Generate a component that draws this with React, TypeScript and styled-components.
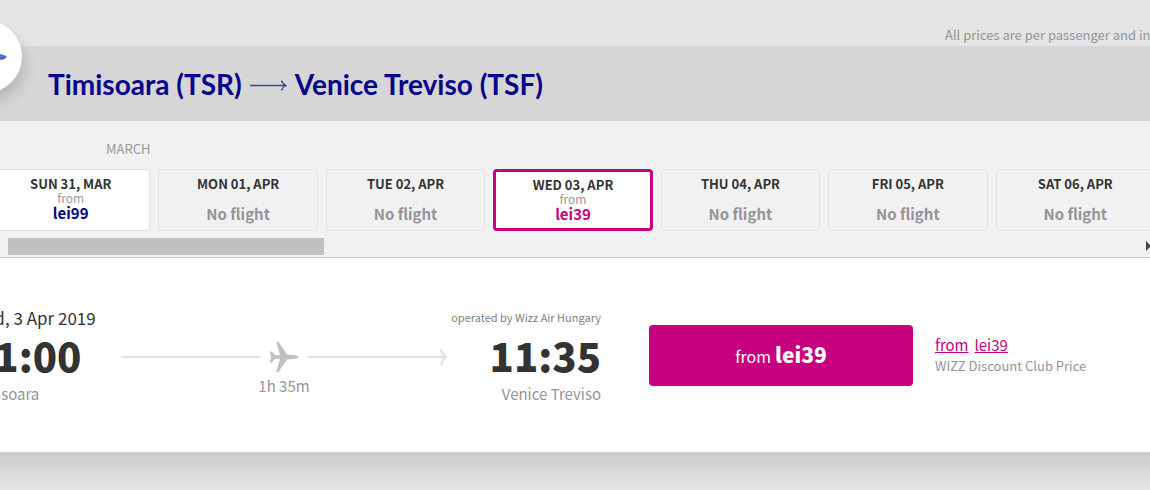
import React from "react";
import styled, { createGlobalStyle } from "styled-components";

const GlobalStyle = createGlobalStyle`
  * { box-sizing: border-box; }
  body {
    margin: 0;
    background: #e4e4e4;
    color: #333;
    font-family: "Noto Sans CJK SC", "Noto Sans", sans-serif;
    overflow-x: hidden;
  }
`;

const Page = styled.main`
  overflow: hidden;
`;

const PriceNote = styled.p`
  width: 205px;
  height: 46px;
  margin: 0 0 0 auto;
  padding-top: 25px;
  font-size: 13px;
  line-height: 20px;
  color: #96939a;
  white-space: nowrap;
`;

const FlightPanel = styled.section`
  background: #fff;
`;

const PanelShadow = styled.div`
  height: 38px;
  background: linear-gradient(#cdcdcd, #d1d1d1 30%, #e0e0e0 75%, #e4e4e4);
`;

const RouteHeader = styled.header`
  position: relative;
  display: flex;
  align-items: center;
  height: 75px;
  padding-left: 48px;
  background: #d6d6d6;
`;

const RouteBadge = styled.span`
  position: absolute;
  left: -51px;
  top: -26px;
  width: 73px;
  height: 73px;
  border-radius: 50%;
  background: #fff;
  box-shadow: 3px 9px 14px rgba(0, 0, 0, 0.14);
  display: flex;
  align-items: center;
  justify-content: center;
`;

const RouteTitle = styled.h1`
  display: flex;
  align-items: center;
  gap: 8px;
  margin: 0;
  font-family: Lato, sans-serif;
  font-size: 28px;
  line-height: 36px;
  font-weight: 700;
  color: #06038d;
  white-space: nowrap;
`;

const Calendar = styled.div`
  background: #f1f1f1;
  border-bottom: 1px solid #c4c4c4;
`;

const Month = styled.div`
  padding: 18px 0 10px 106px;
  font-size: 13px;
  line-height: 20px;
  color: #999;
`;

const Days = styled.div`
  display: grid;
  grid-template-columns: repeat(7, 1fr);
  gap: 8px;
  margin: 0 -5px 0 -9px;
`;

type DayState = "none" | "open" | "selected";

const Day = styled.button<{ $state: DayState }>`
  display: flex;
  flex-direction: column;
  align-items: center;
  height: 62px;
  padding: ${(p) => (p.$state === "selected" ? "5px" : "6px")} 0 0;
  border: ${(p) => (p.$state === "selected" ? "3px solid #c6007e" : "1px solid #e2e2e2")};
  border-radius: 4px;
  background: ${(p) => (p.$state === "none" ? "transparent" : "#fff")};
  font-family: inherit;
  color: #333;
`;

const DayDate = styled.span`
  font-size: 13px;
  line-height: 16px;
  font-weight: 700;
`;

const DayFrom = styled.span`
  font-size: 12px;
  line-height: 12px;
  color: #999;
`;

const DayPrice = styled.span<{ $selected: boolean }>`
  font-size: 15px;
  line-height: 18px;
  font-weight: 700;
  color: ${(p) => (p.$selected ? "#c6007e" : "#06038d")};
`;

const NoFlight = styled.span`
  margin-top: 13px;
  font-size: 15px;
  line-height: 18px;
  font-weight: 700;
  color: #969398;
`;

const ScrollRow = styled.div`
  display: flex;
  align-items: center;
  height: 26px;
  padding: 6px 0 2px 8px;
  margin-right: -13px;
`;

const ScrollRange = styled.input`
  appearance: none;
  flex: 1;
  min-width: 0;
  height: 17px;
  margin: 0;
  background: transparent;
  &::-webkit-slider-thumb {
    appearance: none;
    width: 316px;
    height: 17px;
    background: #c1c1c1;
  }
`;

const ScrollButton = styled.button`
  display: flex;
  align-items: center;
  width: 17px;
  height: 17px;
  padding: 0;
  border: 0;
  background: transparent;
`;

const Flight = styled.article`
  display: flex;
  align-items: flex-start;
  height: 194px;
  padding-top: 48px;
  margin-left: -30px;
  white-space: nowrap;
`;

const Stop = styled.div<{ $end?: boolean }>`
  display: flex;
  flex-direction: column;
  flex: none;
  width: ${(p) => (p.$end ? "154px" : "151px")};
  align-items: ${(p) => (p.$end ? "flex-end" : "flex-start")};
`;

const FlightDate = styled.span`
  font-size: 17px;
  line-height: 24px;
`;

const Operator = styled.span`
  margin-bottom: 2px;
  font-size: 11px;
  line-height: 22px;
  color: #808080;
`;

const Time = styled.strong`
  margin-bottom: 2px;
  font-size: 40px;
  line-height: 50px;
  font-weight: 900;
`;

const Place = styled.span`
  font-size: 15px;
  line-height: 24px;
  color: #969398;
`;

const Track = styled.div`
  flex: 1;
  min-width: 0;
  padding-top: 35px;
  text-align: center;
`;

const TrackLine = styled.div`
  display: flex;
  align-items: center;
  gap: 8px;
  height: 32px;
`;

const Line = styled.span`
  flex: 1;
  height: 2px;
  background: #e2e2e2;
`;

const ArrowLine = styled.span`
  flex: 1;
  display: flex;
  align-items: center;
`;

const ArrowHead = styled.svg`
  flex: none;
  margin-left: -8px;
`;

const BuyButton = styled.button`
  flex: none;
  display: flex;
  align-items: baseline;
  justify-content: center;
  gap: 4px;
  width: 264px;
  height: 61px;
  margin: 19px 22px 0 48px;
  padding: 0;
  border: 0;
  border-radius: 4px;
  background: #c6007e;
  color: #fff;
  font-family: inherit;
  font-size: 16px;
  line-height: 59px;
`;

const BuyPrice = styled.strong`
  font-size: 21px;
  font-weight: 900;
`;

const Club = styled.div`
  flex: none;
  width: 215px;
  padding-top: 27px;
`;

const ClubLink = styled.a`
  display: flex;
  gap: 6px;
  font-size: 15px;
  line-height: 24px;
  color: #c6007e;
  text-decoration: underline;
`;

const ClubText = styled.div`
  font-size: 13px;
  line-height: 18px;
  color: #969398;
`;

const days: { date: string; price?: string; selected?: boolean }[] = [
  { date: "SUN 31, MAR", price: "lei99" },
  { date: "MON 01, APR" },
  { date: "TUE 02, APR" },
  { date: "WED 03, APR", price: "lei39", selected: true },
  { date: "THU 04, APR" },
  { date: "FRI 05, APR" },
  { date: "SAT 06, APR" },
];

const stateOf = (d: { price?: string; selected?: boolean }): DayState =>
  d.selected ? "selected" : d.price ? "open" : "none";

export default function App() {
  return (
    <Page>
      <GlobalStyle />
      <PriceNote>All prices are per passenger and include</PriceNote>
      <FlightPanel>
        <RouteHeader>
          <RouteBadge>
            <svg width="42" height="30" viewBox="0 0 42 30" aria-hidden="true">
              <path d="M2 15 6 11.8H34Q40 12.8 42 15Q39 17.6 34 18H6Z" fill="#4a7bc0" />
              <path d="M36 15.5H41.5L37 17.5Z" fill="#2a4f9c" />
            </svg>
          </RouteBadge>
          <RouteTitle>
            Timisoara (TSR)
            <svg width="37" height="14" viewBox="0 0 37 14" fill="none" stroke="#3b48a0" role="img" aria-label="to">
              <path d="M0 8.5H35M31.5 3.5Q32.5 7 36 8.5Q32.5 10 31.5 13.5" strokeWidth="1.3" />
            </svg>
            Venice Treviso (TSF)
          </RouteTitle>
        </RouteHeader>
        <Calendar>
          <Month>MARCH</Month>
          <Days>
            {days.map((d) => (
              <Day key={d.date} type="button" $state={stateOf(d)}>
                <DayDate>{d.date}</DayDate>
                {d.price ? (
                  <>
                    <DayFrom>from</DayFrom>
                    <DayPrice $selected={!!d.selected}>{d.price}</DayPrice>
                  </>
                ) : (
                  <NoFlight>No flight</NoFlight>
                )}
              </Day>
            ))}
          </Days>
          <ScrollRow>
            <ScrollRange type="range" min={0} max={100} defaultValue={0} aria-label="Scroll dates" />
            <ScrollButton type="button" aria-label="Next dates">
              <svg width="5" height="10" viewBox="0 0 5 10" aria-hidden="true">
                <path d="M0 0 5 5 0 10Z" fill="#4a4246" />
              </svg>
            </ScrollButton>
          </ScrollRow>
        </Calendar>
        <Flight>
          <Stop>
            <FlightDate>Wed, 3 Apr 2019</FlightDate>
            <Time>11:00</Time>
            <Place>Timisoara</Place>
          </Stop>
          <Track>
            <TrackLine>
              <Line />
              <svg width="32" height="32" viewBox="0 0 32 32" fill="#c1c1c1" aria-hidden="true">
                <path d="M1.5 10.5H3.5L7.5 14.3L12 14L8.2 1H10.6L19.2 13.6L26 13.9Q30 14.4 31 16Q30 17.6 26 18.1L19.2 18.4L10.6 31H8.2L12 18L7.5 17.7L3.5 21.5H1.5L3.2 16Z" />
              </svg>
              <ArrowLine>
                <Line />
                <ArrowHead width="8" height="18" viewBox="0 0 8 18" fill="none" stroke="#e2e2e2" strokeWidth="2" aria-hidden="true">
                  <path d="M2 1Q3 6 7 9Q3 12 2 17" />
                </ArrowHead>
              </ArrowLine>
            </TrackLine>
            <Place>1h 35m</Place>
          </Track>
          <Stop $end>
            <Operator>operated by Wizz Air Hungary</Operator>
            <Time>11:35</Time>
            <Place>Venice Treviso</Place>
          </Stop>
          <BuyButton type="button">
            from <BuyPrice>lei39</BuyPrice>
          </BuyButton>
          <Club>
            <ClubLink href="#">
              <span>from</span>
              <span>lei39</span>
            </ClubLink>
            <ClubText>WIZZ Discount Club Price</ClubText>
          </Club>
        </Flight>
      </FlightPanel>
      <PanelShadow />
    </Page>
  );
}
